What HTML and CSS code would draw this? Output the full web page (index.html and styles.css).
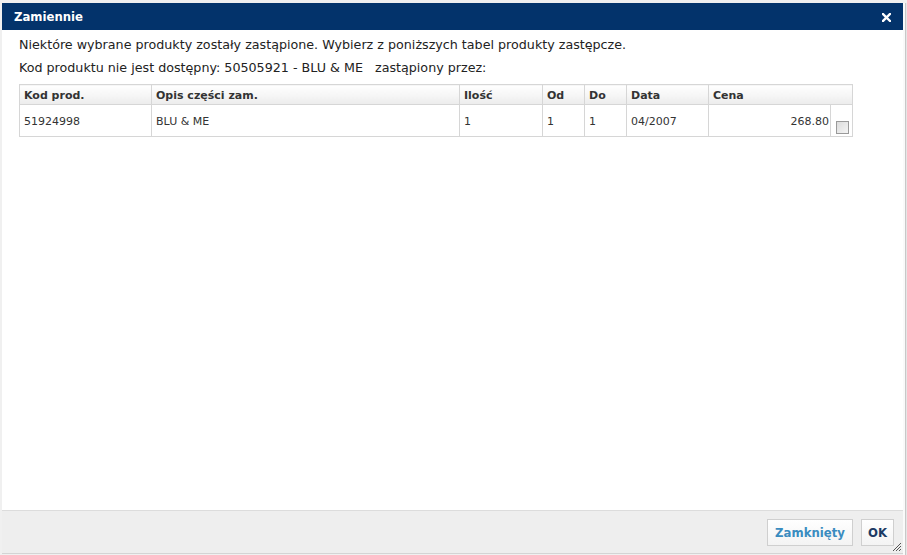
FILE: index.html
```html
<!DOCTYPE html>
<html lang="pl">
<head>
<meta charset="utf-8">
<link rel="stylesheet" href="styles.css">
</head>
<body>
<div class="page">
  <div class="dialog">
    <div class="titlebar">
      <span class="title">Zamiennie</span>
      <span class="close" aria-label="close">
        <svg width="9" height="9" viewBox="0 0 9 9"><path d="M1 1 L8 8 M8 1 L1 8" stroke="#fff" stroke-width="2.4" stroke-linecap="square"/></svg>
      </span>
    </div>
    <div class="content">
      <p class="msg msg1">Niektóre wybrane produkty zostały zastąpione. Wybierz z poniższych tabel produkty zastępcze.</p>
      <p class="msg msg2">Kod produktu nie jest dostępny: 50505921 - BLU &amp; ME &nbsp; zastąpiony przez:</p>
      <table class="grid">
        <colgroup>
          <col class="c-kod"><col class="c-opis"><col class="c-ilosc"><col class="c-od"><col class="c-do"><col class="c-data"><col class="c-cena"><col class="c-chk">
        </colgroup>
        <thead>
          <tr>
            <th>Kod prod.</th>
            <th>Opis części zam.</th>
            <th>Ilość</th>
            <th>Od</th>
            <th>Do</th>
            <th>Data</th>
            <th colspan="2">Cena</th>
          </tr>
        </thead>
        <tbody>
          <tr>
            <td>51924998</td>
            <td>BLU &amp; ME</td>
            <td>1</td>
            <td>1</td>
            <td>1</td>
            <td>04/2007</td>
            <td class="num">268.80</td>
            <td class="chk"><span class="checkbox"></span></td>
          </tr>
        </tbody>
      </table>
    </div>
    <div class="footer">
      <button class="btn btn-close">Zamknięty</button>
      <button class="btn btn-ok">OK</button>
      <span class="grip">
        <svg width="11" height="11" viewBox="0 0 11 11"><path d="M10 2 L2 10 M10 5 L5 10 M10 8 L8 10" stroke="#555" stroke-width="1"/></svg>
      </span>
    </div>
  </div>
  <div class="side"></div>
</div>
</body>
</html>
```

FILE: styles.css
```css
html, body {
  margin: 0;
  padding: 0;
}
body {
  background: #f0f0f0;
  font-family: "DejaVu Sans", Verdana, sans-serif;
  color: #333;
  width: 907px;
  height: 555px;
  overflow: hidden;
}
.page {
  display: flex;
  height: 555px;
  padding: 3px 0 0 2px;
  box-sizing: border-box;
}
.dialog {
  width: 901px;
  height: 551px;
  display: flex;
  flex-direction: column;
  background: #fff;
}
.side {
  flex: 1;
  border-left: 2px solid #fafafa;
  background: linear-gradient(to right, #c8c8c8 0, #c8c8c8 1px, #e6e6e6 1px);
}
.titlebar {
  height: 27px;
  background: #03336b;
  display: flex;
  align-items: center;
  justify-content: space-between;
  padding: 0 12px 0 12px;
  flex: none;
}
.title {
  color: #fff;
  font-weight: bold;
  font-size: 11.7px;
}
.close {
  display: flex;
  align-items: center;
  margin-top: 1px;
}
.content {
  flex: 1;
  padding: 6px 17px 0 17px;
  font-size: 12.7px;
}
.msg {
  margin: 0;
  line-height: 17px;
  color: #222;
}
.msg1 {
  margin-bottom: 6px;
}
.msg2 {
  margin-bottom: 8px;
}
.grid {
  width: 833px;
  table-layout: fixed;
  border-collapse: collapse;
  border: 1px solid #d6d6d6;
  font-size: 11px;
}
.c-kod { width: 132px; }
.c-opis { width: 308px; }
.c-ilosc { width: 83px; }
.c-od { width: 42px; }
.c-do { width: 42px; }
.c-data { width: 82px; }
.c-cena { width: 122px; }
.c-chk { width: 22px; }
.grid th {
  height: 18px;
  padding: 1px 4px 0 4px;
  text-align: left;
  font-weight: bold;
  color: #333;
  border: 1px solid #d6d6d6;
  background: linear-gradient(to bottom, #ffffff 0%, #f6f6f6 50%, #ececec 100%);
}
.grid td {
  height: 30px;
  padding: 1px 4px 0 4px;
  border: 1px solid #d6d6d6;
  color: #333;
  vertical-align: middle;
}
.grid td.num {
  text-align: right;
  padding-right: 1px;
}
.grid td.chk {
  padding: 0 0 0 5px;
  vertical-align: bottom;
}
.checkbox {
  display: block;
  width: 11px;
  height: 11px;
  border: 1px solid #9a9a9a;
  background: linear-gradient(135deg, #dcdcdc 0%, #f4f4f4 100%);
  margin-bottom: 2px;
}
.footer {
  height: 42px;
  flex: none;
  background: #eeeeee;
  border-top: 1px solid #dcdcdc;
  border-bottom: 1px solid #d4d4d4;
  display: flex;
  align-items: center;
  justify-content: flex-end;
  gap: 8px;
  padding-right: 9px;
  position: relative;
}
.btn {
  height: 27px;
  font-family: "DejaVu Sans", Verdana, sans-serif;
  font-size: 11.7px;
  font-weight: bold;
  border: 1px solid #cfcfcf;
  background: linear-gradient(to bottom, #ffffff 0%, #f3f3f3 100%);
  padding: 0;
  margin-top: 1px;
}
.btn-close {
  color: #3a8cc0;
  width: 86px;
}
.btn-ok {
  color: #1c3a64;
  width: 33px;
}
.grip {
  position: absolute;
  right: 1px;
  bottom: 1px;
  display: flex;
}
```
